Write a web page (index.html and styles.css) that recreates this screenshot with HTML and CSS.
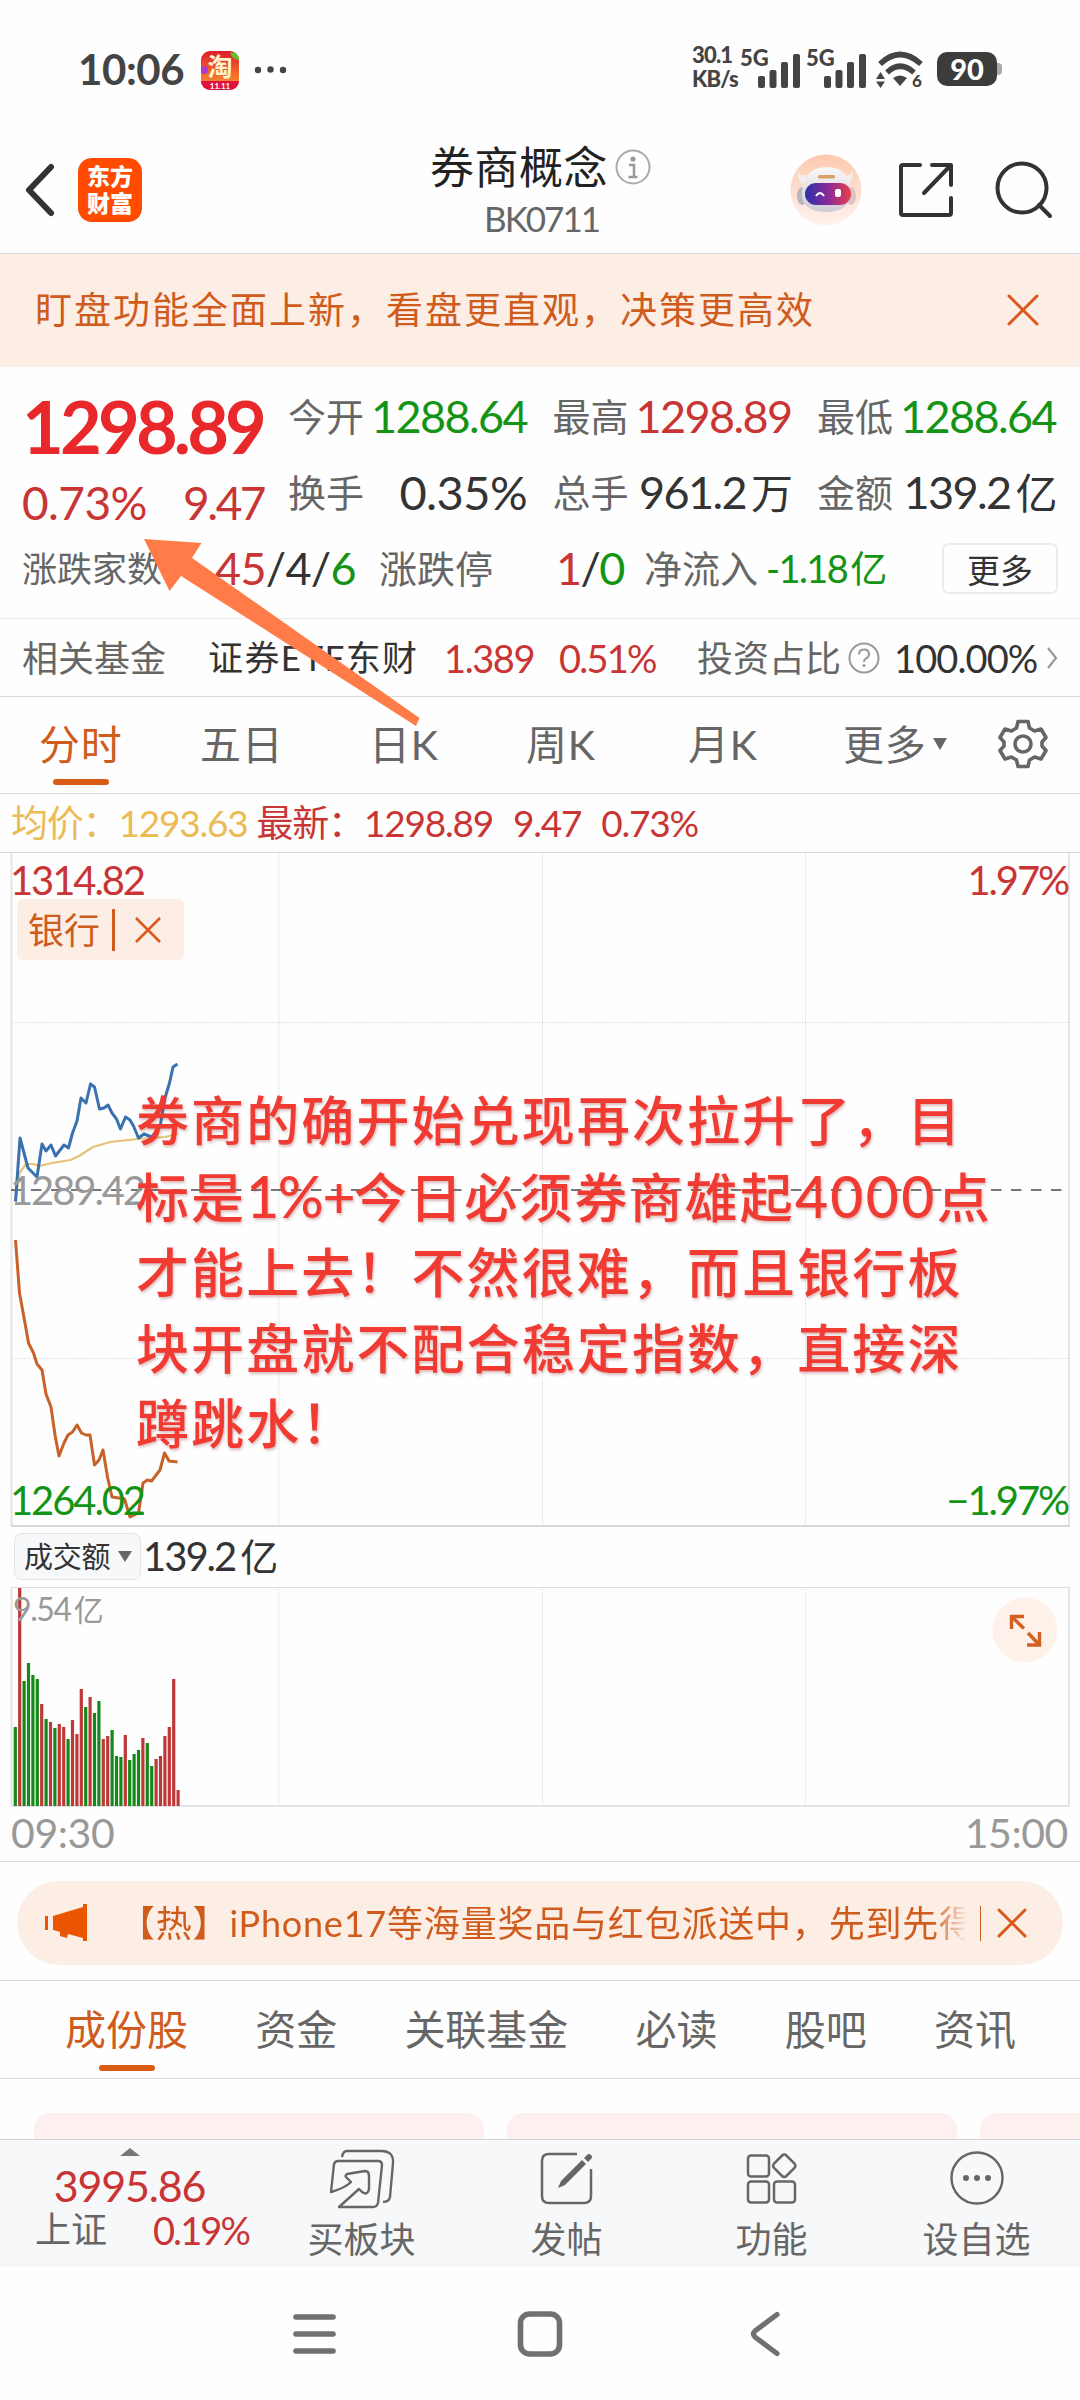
FILE: index.html
```
<!DOCTYPE html>
<html lang="zh-CN">
<head>
  <meta charset="UTF-8" />
  <meta name="viewport" content="width=device-width, initial-scale=1.0"/>
  <title>券商概念 BK0711</title>
  <link rel="stylesheet" href="styles.css">
</head>
<body>
<div class="phone">

  <!-- system status bar -->
  <div class="status">
    <span class="clock">10:06</span>
    <svg class="taobao" width="38" height="40" viewBox="0 0 38 40">
      <defs>
        <linearGradient id="tb" x1="0" y1="0" x2="0" y2="1">
          <stop offset="0" stop-color="#e01b2c"/>
          <stop offset="0.6" stop-color="#f3702a"/>
          <stop offset="1" stop-color="#f39a4a"/>
        </linearGradient>
        <clipPath id="tbClip"><rect width="38" height="39" rx="9"/></clipPath>
      </defs>
      <g clip-path="url(#tbClip)">
        <rect width="38" height="40" fill="url(#tb)"/>
        <circle cx="3" cy="19" r="4" fill="#b03ad0"/>
        <path d="M29 2l9-1v8q-6 0-9-7z" fill="#5cc22e"/>
        <rect y="30" width="38" height="10" fill="#e0123f"/>
        <text x="19" y="25" class="taobao-char">淘</text>
        <text x="19" y="38" class="taobao-date">11.11</text>
      </g>
    </svg>
    <svg class="more-dots" width="34" height="10" viewBox="0 0 34 10">
      <g fill="#444"><circle cx="4" cy="5" r="3.2"/><circle cx="16.5" cy="4.5" r="3.2"/><circle cx="29" cy="5" r="3.2"/></g>
    </svg>
    <div class="speed"><span>30.1</span><span>KB/s</span></div>
    <div class="signal">
      <span>5G</span>
      <svg width="42" height="36" viewBox="0 0 42 36" fill="#444"><rect x="0" y="23" width="7" height="12" rx="2"/><rect x="11.5" y="17" width="7" height="18" rx="2"/><rect x="23" y="9" width="7" height="26" rx="2"/><rect x="35" y="1" width="7" height="34" rx="2"/></svg>
    </div>
    <div class="signal">
      <span>5G</span>
      <svg width="42" height="36" viewBox="0 0 42 36" fill="#444"><rect x="0" y="23" width="7" height="12" rx="2"/><rect x="11.5" y="17" width="7" height="18" rx="2"/><rect x="23" y="9" width="7" height="26" rx="2"/><rect x="35" y="1" width="7" height="34" rx="2"/></svg>
    </div>
    <svg class="wifi" width="48" height="42" viewBox="0 0 48 42">
      <g fill="none" stroke="#444" stroke-width="5.5">
        <path d="M4 14Q24-5 45 14"/>
        <path d="M11 22.5Q24 10 38 22.5"/>
      </g>
      <path d="M17 28q7-5 14 0l-7 8z" fill="#444"/>
      <path d="M0 29l4.5-7 4.500 7zM0 31.500h9L4.500 38z" fill="#444"/>
      <text x="36" y="37" class="wifi-six">6</text>
    </svg>
    <div class="battery"><span>90</span></div>
  </div>

  <!-- title bar -->
  <header class="header">
    <svg class="back" width="30" height="54" viewBox="0 0 30 54"><path d="M26 4L4 27l22 23" fill="none" stroke="#333" stroke-width="6" stroke-linecap="round" stroke-linejoin="round"/></svg>
    <div class="logo"><span>东方</span><span>财富</span></div>
    <div class="title">
      <div class="title-name">券商概念
        <svg width="36" height="36" viewBox="0 0 36 36"><circle cx="18" cy="18" r="16.5" fill="none" stroke="#aaa" stroke-width="2"/><circle cx="18" cy="10" r="2.6" fill="#999"/><path d="M14 16h5v11M13.5 28h9" fill="none" stroke="#999" stroke-width="2.5"/></svg>
      </div>
      <div class="title-code">BK0711</div>
    </div>
    <svg class="robot" width="72" height="72" viewBox="0 0 72 72">
      <defs>
        <linearGradient id="halo" x1="0" y1="0" x2="0" y2="1"><stop offset="0" stop-color="#fdc9ae"/><stop offset="1" stop-color="#fff3ee"/></linearGradient>
        <linearGradient id="visor"><stop offset="0" stop-color="#2b2fa8"/><stop offset="0.5" stop-color="#8a2a9a"/><stop offset="1" stop-color="#e8404a"/></linearGradient>
        <linearGradient id="helmet" x1="0" y1="0" x2="0" y2="1"><stop offset="0" stop-color="#faf8f8"/><stop offset="1" stop-color="#cfcad4"/></linearGradient>
      </defs>
      <circle cx="36" cy="36" r="35.5" fill="url(#halo)"/>
      <path d="M8 16q2 8 9 5l-2 10q-9-4-7-15zM62 16q-2 8-9 5l3 10q9-4 6-15z" fill="#f6eeee"/>
      <ellipse cx="12" cy="42" rx="5" ry="9" fill="#b9b3bc"/>
      <ellipse cx="61" cy="42" rx="5" ry="9" fill="#d9c3c8"/>
      <path d="M12 38Q14 13 37 13T60 38Q62 57 36 58 10 57 12 38z" fill="url(#helmet)"/>
      <rect x="28" y="21" width="17" height="3.5" rx="1.5" fill="#d9a06a"/>
      <rect x="15" y="29" width="46" height="22" rx="11" fill="url(#visor)"/>
      <path d="M26 42q4-6 8 0" fill="none" stroke="#fff" stroke-width="2"/>
      <rect x="45" y="35" width="6" height="8" rx="2" fill="#fff"/>
    </svg>
    <svg class="share" width="56" height="56" viewBox="0 0 56 56"><path d="M22 3H5q-2 0-2 2v46q0 2 2 2h46q2 0 2-2V36M34 3h19v20M53 3L26 31" fill="none" stroke="#333" stroke-width="4" stroke-linecap="round" stroke-linejoin="round"/></svg>
    <svg class="search" width="58" height="58" viewBox="0 0 58 58"><circle cx="27" cy="27" r="24.5" fill="none" stroke="#333" stroke-width="4"/><path d="M44 44l11 11" stroke="#333" stroke-width="4" stroke-linecap="round"/></svg>
  </header>

  <div class="notice">
    <span>盯盘功能全面上新，看盘更直观，决策更高效</span>
    <svg width="32" height="32" viewBox="0 0 32 32"><path d="M2 2l28 28M30 2L2 30" stroke="#d9581a" stroke-width="3" stroke-linecap="round"/></svg>
  </div>

  <!-- quote summary -->
  <section class="quote">
    <div class="quote-main">
      <div class="price">1298.89</div>
      <div class="change"><span class="pct">0.73%</span><span>9.47</span></div>
    </div>
    <div class="quote-grid">
      <div class="cell"><label>今开</label><b class="down">1288.64</b></div>
      <div class="cell"><label>最高</label><b class="up">1298.89</b></div>
      <div class="cell"><label>最低</label><b class="down">1288.64</b></div>
      <div class="cell"><label>换手</label><b class="pct">0.35%</b></div>
      <div class="cell"><label>总手</label><b>961.2<i>万</i></b></div>
      <div class="cell"><label>金额</label><b>139.2<i>亿</i></b></div>
    </div>
    <div class="quote-foot">
      <label class="small w-count">涨跌家数</label>
      <b class="w-ratio"><em class="up">45</em>/4/<em class="down">6</em></b>
      <label class="w-limit">涨跌停</label>
      <b class="w-stop"><em class="up">1</em>/<em class="down">0</em></b>
      <label class="w-flow">净流入</label>
      <b class="down flow">-1.18<i>亿</i></b>
      <button class="more-btn">更多</button>
    </div>
  </section>

  <div class="fund">
    <label class="w-fund">相关基金</label>
    <span class="w-name">证券ETF东财</span>
    <span class="up w-nav">1.389</span>
    <span class="up w-pct">0.51%</span>
    <label class="w-invest">投资占比</label>
    <svg class="help" width="32" height="32" viewBox="0 0 32 32"><circle cx="16" cy="16" r="14.5" fill="none" stroke="#999" stroke-width="2"/><path d="M11 12.5q0-5 5-5t5 4.500q0 3-3 4.500-2 1-2 3.500" fill="none" stroke="#999" stroke-width="2"/><circle cx="16" cy="23.5" r="1.5" fill="#999"/></svg>
    <span class="w-share">100.00%</span>
    <svg width="14" height="24" viewBox="0 0 14 24"><path d="M3 2l8 10-8 10" fill="none" stroke="#999" stroke-width="2.2"/></svg>
  </div>

  <nav class="tabs period">
    <a class="active">分时</a>
    <a>五日</a>
    <a>日K</a>
    <a>周K</a>
    <a>月K</a>
    <a>更多<svg width="14" height="12" viewBox="0 0 14 12"><path d="M0 0h14L7 12z" fill="#666"/></svg></a>
    <svg class="gear" width="50" height="50" viewBox="0 0 50 50"><g fill="none" stroke="#666" stroke-width="3.6" stroke-linejoin="round"><path d="M20 2.500h10l1.500 6.500 5 3 6.500-2 5 8.500-4 4.500v4l4 4.500-5 8.500-6.500-2-5 3-1.500 6.500H20l-1.500-6.500-5-3-6.500 2-5-8.500 4-4.500v-4l-4-4.500L7 10l6.500 2 5-3z"/><circle cx="25" cy="25" r="8"/></g></svg>
  </nav>

  <div class="legend">
    <span class="avg">均价：1293.63</span>
    <span class="up last">最新：1298.89</span>
    <span class="up">9.47</span>
    <span class="up">0.73%</span>
  </div>

  <!-- intraday chart -->
  <div class="chart">
    <svg class="plot" width="1080" height="674" viewBox="0 853 1080 674">
      <g stroke="#d4d5d7" stroke-width="1" stroke-dasharray="1 1.5">
        <path d="M279 853v673M542.5 853v673M805.5 853v673M12 1022.5h1057M12 1358.5h1057"/>
      </g>
      <path d="M11.5 853v673M1069 853v673" stroke="#e3e4e6" stroke-width="2"/>
      <path d="M11 1526h1059" stroke="#d5d6d8" stroke-width="2"/>
      <path d="M11 1190h1058" stroke="#777" stroke-width="2" stroke-dasharray="10.5 9.5"/>
      <polyline class="line avg-line" points="15.5,1200 19.5,1173 26,1164 33,1164 39.5,1166 52,1163 70.5,1160 79,1156 93,1147 110,1142 138,1139 165,1137 177.5,1134"/>
      <polyline class="line index-line" points="15.5,1201.7 20,1138 28,1168 37,1177 42,1144 46,1151 51,1145 55.5,1156 64,1145 68.5,1148 72.5,1133 77,1121 81,1098 86,1103 90.5,1084 94.5,1087 99.5,1109 104,1108 108,1105 112,1113 116.5,1119 120.5,1129 125.5,1117 130,1120 133.5,1126 138.5,1138 144,1134 151.5,1137 160,1127 165,1098 169.5,1083 173,1067 177.5,1064"/>
      <polyline class="line bank-line" points="15.5,1240 19.5,1293 25,1323 28.5,1343 33.5,1353 37,1364 42,1370 46,1394 51,1407 55,1435 59,1456 64,1443 68,1435 72.5,1432 77,1425 81.5,1433 86,1435 90,1435 94.5,1465 99,1460 103,1450 107.5,1477 112,1497 119,1498 124.5,1499 130,1517 138.5,1513 143,1483 147.5,1480 151.5,1481 160,1470 164.5,1453 169,1461 177.5,1462"/>
    </svg>
    <span class="axis top left up">1314.82</span>
    <span class="axis top right up">1.97%</span>
    <span class="axis mid left">1289.42</span>
    <span class="axis bottom left down">1264.02</span>
    <span class="axis bottom right down">−1.97%</span>
    <div class="compare">
      <span>银行</span>
      <svg width="26" height="26" viewBox="0 0 26 26"><path d="M1 1l24 24M25 1L1 25" stroke="#d9581a" stroke-width="2.5"/></svg>
    </div>
    <p class="note">券商的确开始兑现再次拉升了，目<br>标是<span class="num">1%+</span>今日必须券商雄起<span class="num wide">4000</span>点<br>才能上去！不然很难，而且银行板<br>块开盘就不配合稳定指数，直接深<br>蹲跳水！</p>
  </div>

  <div class="volume-head">
    <div class="select">成交额<svg width="14" height="11" viewBox="0 0 14 11"><path d="M0 0h14L7 11z" fill="#666"/></svg></div>
    <span>139.2<i>亿</i></span>
  </div>

  <!-- turnover bars, one per minute -->
  <div class="volume">
    <svg class="plot" width="1080" height="221" viewBox="0 1587 1080 221">
      <path d="M279 1587v219M542.5 1587v219M805.5 1587v219" stroke="#d4d5d7" stroke-dasharray="1 1.5"/>
      <path d="M11 1587.5h1059" stroke="#dcdddf"/>
      <path d="M11.5 1587v219M1069 1587v219M11 1806h1059" stroke="#e3e4e6" stroke-width="2"/>
      <path stroke="#14891a" stroke-width="3.2" d="M15.3 1727V1806M24.1 1681V1806M28.5 1663V1806M32.9 1675V1806M37.3 1679V1806M46.1 1719V1806M54.9 1728V1806M68.1 1739V1806M85.7 1707V1806M94.5 1713V1806M98.9 1701V1806M112.1 1730V1806M116.5 1756V1806M120.9 1757V1806M129.7 1760V1806M134.1 1754V1806M138.5 1750V1806M147.3 1743V1806M151.7 1766V1806"/>
      <path stroke="#bf3838" stroke-width="3.2" d="M19.7 1588V1806M41.7 1704V1806M50.5 1722V1806M59.3 1724V1806M63.7 1727V1806M72.5 1720V1806M76.9 1734V1806M81.3 1689V1806M90.1 1697V1806M103.3 1739V1806M107.7 1736V1806M125.3 1735V1806M142.9 1738V1806M156.1 1759V1806M160.5 1756V1806M164.9 1736V1806M169.3 1727V1806M173.7 1679V1806M178.1 1790V1806"/>
    </svg>
    <span class="peak">9.54<i>亿</i></span>
    <svg class="expand" width="66" height="66" viewBox="0 0 66 66"><circle cx="33" cy="33" r="32.5" fill="#fef1ea"/><path d="M32 19.500H19.500V32M20 20l12 11.500M35 48h12.500V35M47 47.500L36 36" fill="none" stroke="#d4601f" stroke-width="3.4"/></svg>
  </div>

  <div class="times"><span>09:30</span><span>15:00</span></div>

  <div class="promo">
    <div class="pill">
      <svg class="horn" width="44" height="38" viewBox="0 0 44 38"><path d="M1 12h3v14H1zM9 12L39 3V0h4v37h-4v-3l-15-4-1 4-7-2v-4l-7-2z" fill="#eb5500"/></svg>
      <span class="pill-text">【热】iPhone17等海量奖品与红包派送中，先到先得</span>
      <span class="pill-bar"></span>
      <svg width="30" height="30" viewBox="0 0 30 30"><path d="M2 2l26 26M28 2L2 28" stroke="#d9581a" stroke-width="3" stroke-linecap="round"/></svg>
    </div>
  </div>

  <nav class="tabs detail">
    <a class="active">成份股</a>
    <a>资金</a>
    <a>关联基金</a>
    <a>必读</a>
    <a>股吧</a>
    <a>资讯</a>
  </nav>

  <div class="cards"><div></div><div></div><div></div></div>

  <footer class="toolbar">
    <div class="index">
      <svg width="20" height="8" viewBox="0 0 20 8"><path d="M0 8L10 0l10 8z" fill="#777"/></svg>
      <span class="index-value up">3995.86</span>
      <div class="index-row"><span>上证</span><span class="up">0.19%</span></div>
    </div>
    <div class="tool">
      <svg width="66" height="60" viewBox="0 0 66 60"><g fill="none" stroke="#666" stroke-width="2.4" stroke-linejoin="round"><path d="M13 8q1-6 5-6h34q13 0 12 12l-3 34q-1 5-7 5"/><path d="M2 43l3-28q1-3 4-3h40q4 0 4 4l-4 38q-1 4-5 4H10l20-18q8 9 10 0V27q0-5-4-5l-18 3q-3 2 0 4l4 4q-6 6-20 10z"/></g></svg>
      <span>买板块</span>
    </div>
    <div class="tool">
      <svg width="54" height="60" viewBox="0 -3 54 60"><path d="M37 2H9Q2 2 2 9v35q0 7 7 7h35q7 0 7-7V17" fill="none" stroke="#666" stroke-width="2.5"/><path d="M18 36l3-7L42 8l4 4-21 21zM44 6l3-3q2-2 4 0t0 4l-3 3z" fill="#666"/></svg>
      <span>发帖</span>
    </div>
    <div class="tool">
      <svg width="52" height="60" viewBox="0 -4 52 60"><g fill="none" stroke="#666" stroke-width="2.5"><rect x="2" y="2.500" width="21" height="21" rx="3"/><rect x="2" y="28.500" width="21" height="21" rx="3"/><rect x="28" y="28.500" width="21" height="21" rx="3"/><rect x="29.500" y="4" width="17.500" height="17.500" rx="3" transform="rotate(45 38.250 12.750)"/></g></svg>
      <span>功能</span>
    </div>
    <div class="tool">
      <svg width="54" height="60" viewBox="0 -3 54 60"><circle cx="27" cy="26" r="25.500" fill="none" stroke="#666" stroke-width="2.400"/><g fill="#666"><circle cx="16" cy="26" r="3"/><circle cx="27" cy="26" r="3"/><circle cx="38" cy="26" r="3"/></g></svg>
      <span>设自选</span>
    </div>
  </footer>

  <!-- system navigation keys -->
  <div class="sysnav">
    <svg width="46" height="46" viewBox="0 0 46 46"><path d="M5 6h37M5 23h37M5 40h37" stroke="#707070" stroke-width="5.600" stroke-linecap="round"/></svg>
    <svg width="46" height="46" viewBox="0 0 46 46"><rect x="3.500" y="3" width="39" height="40" rx="9" fill="none" stroke="#707070" stroke-width="5.600"/></svg>
    <svg width="46" height="46" viewBox="0 0 46 46"><path d="M34 3.500L12 20q-3 3 0 6l22 16.500" fill="none" stroke="#707070" stroke-width="5.200" stroke-linecap="round"/></svg>
  </div>

  <svg class="arrow" width="280" height="190" viewBox="142 537 280 190"><path d="M144 539l57.500 4-9.500 15 227.500 160-3.500 8L181 576l-11.500 15z" fill="#ff7b47"/></svg>
</div>
</body>
</html>
```
FILE: styles.css
```
* {
  box-sizing: border-box;
}

body {
  margin: 0;
  background: #fefefe;
  font-family: Lato, "Noto Sans CJK SC", sans-serif;
  color: #333;
  line-height: 1;
}

svg {
  display: block;
  flex: none;
}

b, i, em {
  font-weight: 400;
  font-style: normal;
}

.phone {
  position: relative;
  width: 1080px;
  height: 2400px;
  overflow: hidden;
  white-space: nowrap;
}

.up {
  color: #c93434;
}

.down {
  color: #149414;
}

/* status bar */
.status {
  height: 122px;
  padding: 16px 83px 0 78px;
  display: flex;
  align-items: center;
  color: #444;
}

.clock {
  width: 123px;
  font-size: 42px;
  font-weight: 700;
  letter-spacing: -0.4px;
}

.taobao {
  margin-top: 4px;
}

.taobao-char {
  font-size: 25px;
  font-weight: 700;
  fill: #fff3d0;
  text-anchor: middle;
}

.taobao-date {
  font-size: 8px;
  font-weight: 700;
  fill: #fff;
  text-anchor: middle;
}

.more-dots {
  margin: 2px auto 0 15px;
}

.speed {
  width: 48px;
  display: flex;
  flex-direction: column;
  gap: 2px;
  padding-bottom: 5px;
  font-size: 22px;
  font-weight: 900;
  letter-spacing: -0.8px;
}

.signal {
  width: 66px;
  height: 40px;
  display: flex;
  align-items: flex-end;
}

.signal span {
  width: 18px;
  margin-top: -2px;
  font-size: 22px;
  font-weight: 900;
  align-self: flex-start;
}

.wifi {
  margin: 4px 0 0 4px;
}

.wifi-six {
  font-size: 17px;
  font-weight: 900;
  fill: #444;
}

.battery {
  position: relative;
  width: 60px;
  height: 34px;
  margin-left: 13px;
  border-radius: 10px;
  background: #3c3c3c;
  color: #fff;
  font-size: 29px;
  font-weight: 900;
  text-align: center;
  line-height: 34px;
}

.battery::after {
  content: "";
  position: absolute;
  right: -5px;
  top: 11px;
  width: 5px;
  height: 12px;
  border-radius: 0 4px 4px 0;
  background: #aaa;
}

/* title bar */
.header {
  height: 132px;
  padding: 4px 27px 0 25px;
  border-bottom: 1px solid #d8d9db;
  display: flex;
  align-items: center;
}

.logo {
  width: 64px;
  height: 64px;
  margin-left: 23px;
  border-radius: 14px;
  background: #ff4a00;
  color: #fff;
  display: flex;
  flex-direction: column;
  align-items: center;
  justify-content: center;
  gap: 4px;
  font-size: 23px;
  font-weight: 900;
}

.title {
  width: 230px;
  margin-left: 288px;
  padding-top: 2px;
}

.title-name {
  display: flex;
  align-items: center;
  font-size: 44px;
  color: #222;
  letter-spacing: 0.5px;
}

.title-name svg {
  margin-left: 7px;
}

.title-code {
  margin: 12px 0 0 54px;
  font-size: 35px;
  color: #666;
  letter-spacing: -2px;
}

.robot {
  margin-left: 130px;
}

.share {
  margin-left: 36px;
}

.search {
  margin-left: auto;
}

.notice {
  height: 113px;
  padding: 0 41px 2px 35px;
  background: #fceee5;
  display: flex;
  align-items: center;
  justify-content: space-between;
  font-size: 37px;
  letter-spacing: 2px;
  color: #cf5c1c;
}

/* quote summary */
.quote {
  height: 252px;
  border-bottom: 1px solid #ebebed;
  display: grid;
  grid-template-columns: 288px 1fr;
  grid-template-rows: 164px 1fr;
}

.quote-main {
  padding: 23px 24px 0 22px;
}

.price {
  font-size: 72px;
  font-weight: 700;
  letter-spacing: -3.8px;
  color: #e8282a;
}

.change {
  margin-top: 18px;
  display: flex;
  justify-content: space-between;
  font-size: 46px;
  letter-spacing: -2.5px;
  color: #c93434;
}

.change .pct {
  letter-spacing: -0.6px;
}

.quote-grid {
  padding-top: 11px;
  display: grid;
  grid-template-columns: 239px 239px 239px;
  grid-template-rows: 76px 76px;
  column-gap: 25.5px;
}

.cell {
  display: flex;
  align-items: center;
  justify-content: space-between;
}

.quote label,
.fund label {
  font-size: 38px;
  color: #666;
}

.quote b {
  font-size: 45px;
  letter-spacing: -1.6px;
}

.quote b.pct {
  font-size: 47px;
  letter-spacing: -0.6px;
}

.quote b i {
  font-size: 42px;
  margin-left: 5px;
}

.quote-foot {
  grid-column: 1 / 3;
  padding: 0 22px 13px 22px;
  display: flex;
  align-items: center;
}

.quote-foot label.small {
  font-size: 35px;
}

.w-count {
  width: 193px;
}

.quote b.w-ratio {
  width: 164px;
  letter-spacing: -0.7px;
}

.w-limit {
  width: 177px;
}

.w-stop {
  width: 88px;
}

.w-flow {
  width: 122px;
}

.quote b.flow {
  font-size: 38px;
}

.quote b.flow i {
  font-size: 37px;
  margin-left: 3px;
}

.more-btn {
  width: 116px;
  height: 51px;
  margin-left: auto;
  padding: 0 0 2px;
  border: 2px solid #ececef;
  border-radius: 7px;
  background: none;
  font-family: inherit;
  font-size: 33px;
  color: #333;
}

/* related fund */
.fund {
  height: 78px;
  padding-left: 22px;
  border-bottom: 1px solid #d8d9db;
  display: flex;
  align-items: center;
  font-size: 38px;
  letter-spacing: -1.4px;
}

.fund label {
  font-size: 36px;
  letter-spacing: 0;
}

.w-fund {
  width: 186px;
}

.w-name {
  width: 236px;
  font-size: 35px;
  letter-spacing: 1.4px;
}

.w-nav {
  width: 115px;
}

.w-pct {
  width: 138px;
  letter-spacing: -1.8px;
}

.w-invest {
  width: 151px;
}

.w-share {
  width: 151px;
  margin-left: 14px;
  letter-spacing: -0.9px;
}

/* tab rows */
.tabs {
  display: flex;
  align-items: center;
  border-bottom: 1px solid #d8d9db;
  font-size: 41px;
  color: #666;
}

.tabs a {
  position: relative;
  display: flex;
  align-items: center;
}

.tabs .active {
  color: #cf5c1c;
}

.tabs .active::after {
  content: "";
  position: absolute;
  left: 50%;
  bottom: -20px;
  width: 56px;
  height: 6px;
  margin-left: -28px;
  border-radius: 3px;
  background: #d95b14;
}

.period {
  height: 97px;
  padding: 0 0 2px 39px;
  display: grid;
  grid-template-columns: 161px 169px 157px 162px 155px 155px 1fr;
  justify-items: start;
  letter-spacing: 0.8px;
}

.period a svg {
  margin-left: 6px;
}

.legend {
  height: 59px;
  padding: 0 0 2px 11px;
  border-bottom: 1px solid #d8d9db;
  display: flex;
  align-items: center;
  font-size: 37px;
  letter-spacing: -1.2px;
}

.avg {
  color: #ebbb55;
}

.last {
  margin-left: 9px;
}

.legend .last ~ span {
  margin-left: 20px;
}

/* intraday chart */
.chart {
  position: relative;
  height: 674px;
}

.line {
  fill: none;
  stroke-width: 3;
  stroke-linejoin: round;
}

.avg-line {
  stroke: #e6c377;
  stroke-width: 2.2;
}

.index-line {
  stroke: #3a72b0;
}

.bank-line {
  stroke: #c8622a;
}

.axis {
  position: absolute;
  font-size: 40px;
  letter-spacing: -2.1px;
}

.axis.left {
  left: 10px;
}

.axis.right {
  right: 12px;
}

.axis.top {
  top: 7px;
}

.axis.mid {
  top: 317px;
  color: #999;
}

.axis.bottom {
  top: 627px;
}

.compare {
  position: absolute;
  left: 17px;
  top: 46px;
  width: 167px;
  height: 61px;
  padding: 0 23px 0 11px;
  border-radius: 6px;
  background: #fceee5;
  display: flex;
  align-items: center;
  justify-content: space-between;
  font-size: 36px;
  color: #cf5c1c;
}

.compare span {
  padding-right: 12px;
  border-right: 3px solid #cf5c1c;
  line-height: 42px;
}

.note {
  position: absolute;
  left: 136px;
  top: 230px;
  margin: 0;
  font-size: 53px;
  font-weight: 500;
  line-height: 75.6px;
  letter-spacing: 2.1px;
  color: #f03a32;
  text-shadow: 1px 2px 3px rgba(150, 60, 60, 0.35);
}

.note .num {
  font-size: 57px;
  letter-spacing: -1.4px;
}

.note .wide {
  letter-spacing: 2.4px;
}

/* turnover */
.volume-head {
  height: 60px;
  padding: 0 0 2px 14px;
  display: flex;
  align-items: center;
  font-size: 40px;
  letter-spacing: -2px;
}

.volume-head i {
  margin-left: 5px;
  font-size: 38px;
}

.select {
  width: 127px;
  height: 47px;
  margin-right: 2px;
  padding: 0 8px 0 9px;
  border: 1px solid #e2e4e7;
  border-radius: 8px;
  background: #f7f8fa;
  display: flex;
  align-items: center;
  justify-content: space-between;
  font-size: 29px;
  letter-spacing: -0.3px;
}

.volume {
  position: relative;
  height: 221px;
}

.peak {
  position: absolute;
  left: 13px;
  top: 6px;
  font-size: 32px;
  letter-spacing: -1.4px;
  color: #999;
}

.peak i {
  margin-left: 3px;
  font-size: 30px;
}

.expand {
  position: absolute;
  left: 992px;
  top: 10px;
}

.times {
  height: 54px;
  padding: 4px 12px 0 11px;
  border-bottom: 1px solid #d8d9db;
  display: flex;
  justify-content: space-between;
  font-size: 41px;
  letter-spacing: -0.4px;
  color: #999;
}

/* promo strip */
.promo {
  height: 119px;
  padding: 19px 17px 0;
  border-bottom: 1px solid #d8d9db;
}

.pill {
  height: 84px;
  padding: 0 36px 0 27px;
  border-radius: 42px;
  background: #fceee5;
  display: flex;
  align-items: center;
  color: #cf5c1c;
}

.pill-text {
  width: 846px;
  margin-left: 31px;
  overflow: hidden;
  font-size: 36px;
  line-height: 50px;
  letter-spacing: 0.8px;
  -webkit-mask-image: linear-gradient(90deg, #000 812px, transparent 849px);
  mask-image: linear-gradient(90deg, #000 812px, transparent 849px);
}

.pill-bar {
  width: 1px;
  height: 35px;
  margin: 0 16px 0 15px;
  background: #cf5c1c;
}

.detail {
  height: 98px;
  padding: 0 64px 1px 65px;
  justify-content: space-between;
}

.detail .active::after {
  bottom: -21px;
}

.cards {
  height: 61px;
  padding: 34px 0 0 34px;
  display: flex;
  gap: 23px;
  border-bottom: 1px solid #d3d4d6;
}

.cards div {
  flex: none;
  width: 450px;
  border-radius: 16px 16px 0 0;
  background: #fdf0ef;
}

/* bottom toolbar */
.toolbar {
  height: 127px;
  background: #f7f8fa;
  display: grid;
  grid-template-columns: 259px 205px 205px 205px 205px;
}

.index {
  padding-top: 8px;
  display: flex;
  flex-direction: column;
  align-items: center;
}

.index-value {
  margin-top: 8px;
  font-size: 43px;
  letter-spacing: -1.2px;
}

.index-row {
  width: 100%;
  margin-top: 4px;
  padding: 0 10px 0 35px;
  display: flex;
  justify-content: space-between;
  font-size: 38px;
  letter-spacing: -1.9px;
}

.index-row span:first-child {
  font-size: 36px;
  letter-spacing: 0;
  color: #666;
}

.tool {
  display: flex;
  flex-direction: column;
  align-items: center;
  justify-content: flex-end;
  gap: 12px;
  padding-bottom: 10px;
  font-size: 36px;
  color: #666;
}

.sysnav {
  height: 133px;
  padding: 0 291px;
  display: flex;
  align-items: center;
  justify-content: space-between;
}

.arrow {
  position: absolute;
  left: 142px;
  top: 537px;
}
```
